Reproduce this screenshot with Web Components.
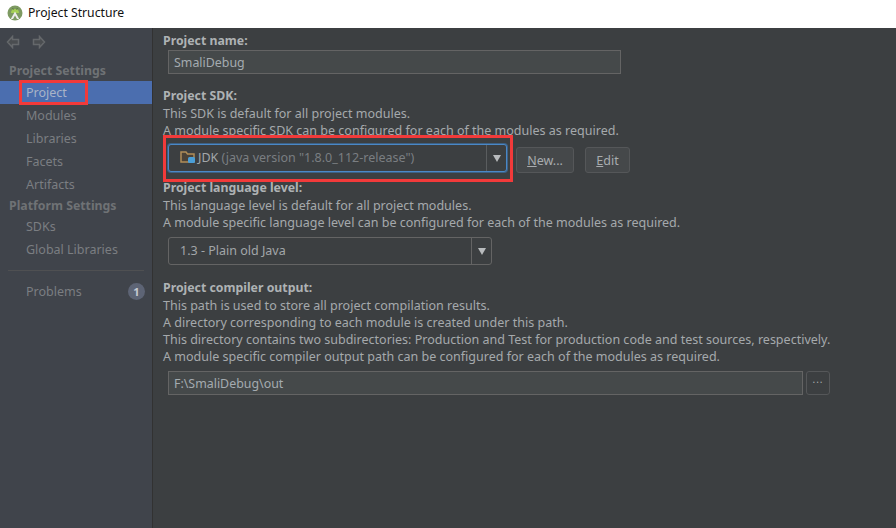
<!DOCTYPE html>
<html>
<head>
<meta charset="utf-8">
<title>Project Structure</title>
<style>
  html, body { margin: 0; height: 100%; }
  body { font-family: "Noto Sans", "Open Sans", sans-serif; font-size: 13px; overflow: hidden; }
</style>
</head>
<body>
<project-structure></project-structure>

<script>
const FONT = '"Noto Sans", "Open Sans", sans-serif';

class TitleBar extends HTMLElement {
  connectedCallback() {
    this.attachShadow({ mode: 'open' }).innerHTML = `
      <style>
        :host { display: flex; align-items: center; height: 28px; background: #fff; color: #111; padding: 0 0 3px 7px; gap: 5px; font-size: 12.2px; box-sizing: border-box; }
        svg { display: block; }
      </style>
      <svg width="16" height="16" viewBox="0 0 16 16">
        <circle cx="8" cy="8" r="7.500" fill="#7d9a62"/>
        <path d="M4 8a4 4 0 0 1 8 0z" fill="#a4cf55"/>
        <path d="M8 6.500L3.800 14h2.200L8 10.500 10 14h2.200z" fill="#ececec"/>
        <path d="M5.500 3l1 1.500M10.500 3l-1 1.500" stroke="#55703a" stroke-width=".9"/>
      </svg>
      <span><slot></slot></span>`;
  }
}

class NavArrows extends HTMLElement {
  connectedCallback() {
    this.attachShadow({ mode: 'open' }).innerHTML = `
      <style>
        :host { display: flex; gap: 12px; height: 14px; padding: 7px 0 0 6px; }
        svg { display: block; }
      </style>
      <svg width="14" height="14" viewBox="0 0 14 14"><path d="M1.500 7l5-5.500v3h6v5h-6v3z" fill="#4a4d50" stroke="#65686b" stroke-width="1.500"/></svg>
      <svg width="14" height="14" viewBox="0 0 14 14"><path d="M12.500 7l-5-5.500v3h-6v5h6v3z" fill="#4a4d50" stroke="#65686b" stroke-width="1.500"/></svg>`;
  }
}

class NavHeading extends HTMLElement {
  connectedCallback() {
    this.attachShadow({ mode: 'open' }).innerHTML = `
      <style>
        :host { display: block; line-height: 19px; padding-left: 9px; font-weight: 700; font-size: 12.3px; color: #6f7275; white-space: nowrap; }
      </style><slot></slot>`;
  }
}

class NavItem extends HTMLElement {
  connectedCallback() {
    const sel = this.hasAttribute('selected');
    this.attachShadow({ mode: 'open' }).innerHTML = `
      <style>
        :host { display: flex; align-items: center; height: 23px; padding-left: 26px; padding-right: 7px; font-size: 12.5px; color: ${sel ? '#a9b4c8' : '#7b7e82'}; background: ${sel ? '#4b6eaf' : 'transparent'}; }
        .sp { flex: 1; }
        .badge { width: 17px; height: 17px; border-radius: 50%; background: #5d6475; color: #c5c9d1; font-size: 11px; font-weight: 700; display: flex; align-items: center; justify-content: center; }
      </style>
      <slot></slot><span class="sp"></span>
      ${this.hasAttribute('badge') ? `<span class="badge">${this.getAttribute('badge')}</span>` : ''}`;
  }
}

class SideBar extends HTMLElement {
  connectedCallback() {
    this.attachShadow({ mode: 'open' }).innerHTML = `
      <style>
        :host { display: flex; flex-direction: column; width: 152px; flex: none; background: #40444b; border-right: 1px solid #323232; box-sizing: content-box; font-family: ${FONT}; }
        .hr { height: 1px; background: #4f5052; margin: 9px 8px 9px 8px; }
      </style>
      <nav-arrows></nav-arrows>
      <nav-heading style="margin-top:12px;height:20px;line-height:20px">Project Settings</nav-heading>
      <nav-item selected>Project</nav-item>
      <nav-item>Modules</nav-item>
      <nav-item>Libraries</nav-item>
      <nav-item>Facets</nav-item>
      <nav-item>Artifacts</nav-item>
      <nav-heading>Platform Settings</nav-heading>
      <nav-item>SDKs</nav-item>
      <nav-item>Global Libraries</nav-item>
      <div class="hr"></div>
      <nav-item badge="1">Problems</nav-item>`;
  }
}

class TextField extends HTMLElement {
  connectedCallback() {
    const w = this.getAttribute('width');
    this.attachShadow({ mode: 'open' }).innerHTML = `
      <style>
        :host { display: flex; align-items: center; box-sizing: border-box; width: ${w}px; height: 24px; padding-left: 5px; margin-left: 5px; background: #45494a; border: 1px solid #646464; color: #a4abb0; font-size: 12.4px; }
      </style><slot></slot>`;
  }
}

class ComboBox extends HTMLElement {
  connectedCallback() {
    const w = this.getAttribute('width');
    const focus = this.hasAttribute('focused');
    this.attachShadow({ mode: 'open' }).innerHTML = `
      <style>
        :host { display: flex; box-sizing: border-box; width: ${w}px; height: 28px; margin-left: 5px; border: 1px solid ${focus ? '#4a88c7' : '#646464'}; border-radius: 3px; background: #3c3f41; color: #a2a6a9; font-size: 12.5px; ${focus ? 'box-shadow: 0 0 0 1px #3d6185;' : ''} }
        .val { flex: 1; display: flex; align-items: center; gap: 2px; padding: 0 0 2px 11px; white-space: nowrap; }
        .arrow { width: 19px; flex: none; border-left: 1px solid ${focus ? '#5a5d5f' : '#646464'}; display: flex; align-items: center; justify-content: center; }
        .arrow i { width: 0; height: 0; border: 4.5px solid transparent; border-top: 7px solid #b8bbbd; border-bottom: 0; }
      </style>
      <div class="val"><slot name="icon"></slot><slot></slot></div>
      <div class="arrow"><i></i></div>`;
  }
}

class PlainButton extends HTMLElement {
  connectedCallback() {
    this.attachShadow({ mode: 'open' }).innerHTML = `
      <style>
        :host { display: inline-flex; align-items: center; justify-content: center; box-sizing: border-box; height: 26px; background: #45484a; border: 1px solid #555759; border-radius: 3px; color: #a8acaf; font-size: 12.5px; }
      </style><slot></slot>`;
  }
}

class FormSection extends HTMLElement {
  connectedCallback() {
    this.attachShadow({ mode: 'open' }).innerHTML = `
      <style>
        :host { display: block; color: #a5a9ac; font-size: 12.53px; line-height: 17px; white-space: nowrap; }
        .t { font-weight: 700; color: #aeb2b4; height: 18px; font-size: 12.3px; }
      </style>
      <div class="t">${this.getAttribute('label')}</div>
      <slot name="desc"></slot>
      <slot></slot>`;
  }
}

class ProjectStructure extends HTMLElement {
  connectedCallback() {
    this.attachShadow({ mode: 'open' }).innerHTML = `
      <style>
        :host { display: flex; flex-direction: column; width: 896px; height: 528px; position: relative; font-family: ${FONT}; }
        .body { flex: 1; display: flex; min-height: 0; background: #3c3f41; }
        main { flex: 1; padding: 4px 0 0 10px; display: flex; flex-direction: column; color: #a9adb0; }
        .row { display: flex; align-items: flex-start; gap: 11px; }
        .mark { position: absolute; border: 3px solid #f23a3a; box-sizing: border-box; pointer-events: none; }
        u { text-decoration: underline; }
        .gray { color: #7a7e81; }
        .btn { margin-top: 3px; }
        .more { width: 24px; height: 24px; padding-bottom: 8px; background: #3c3f41; font-size: 10px; letter-spacing: 1px; }
      </style>
      <title-bar>Project Structure</title-bar>
      <div class="body">
        <side-bar></side-bar>
        <main>
          <form-section label="Project name:" style="height:55px">
            <text-field width="453">SmaliDebug</text-field>
          </form-section>
          <form-section label="Project SDK:" style="height:92px">
            <div slot="desc">This SDK is default for all project modules.</div>
            <div slot="desc">A module specific SDK can be configured for each of the modules as required.</div>
            <div class="row" style="margin-top:5px">
              <combo-box width="339" focused>
                <svg slot="icon" width="16" height="14" viewBox="0 0 16 14">
                  <path d="M1 2h5l1.500 2H14v8H1z" fill="#4a4238" stroke="#b08d58" stroke-width="1.500"/>
                  <rect x="8" y="7" width="7" height="6" rx="1.500" fill="#4a9fd8"/>
                </svg>
                <span>JDK <span class="gray">(java version "1.8.0_112-release")</span></span>
              </combo-box>
              <plain-button class="btn" style="width:58px;margin-left:-2px"><u>N</u>ew...</plain-button>
              <plain-button class="btn" style="width:45px"><u>E</u>dit</plain-button>
            </div>
          </form-section>
          <form-section label="Project language level:" style="height:100px">
            <div slot="desc">This language level is default for all project modules.</div>
            <div slot="desc">A module specific language level can be configured for each of the modules as required.</div>
            <combo-box width="324" style="margin-top:6px">1.3 - Plain old Java</combo-box>
          </form-section>
          <form-section label="Project compiler output:">
            <div slot="desc">This path is used to store all project compilation results.</div>
            <div slot="desc">A directory corresponding to each module is created under this path.</div>
            <div slot="desc">This directory contains two subdirectories: Production and Test for production code and test sources, respectively.</div>
            <div slot="desc">A module specific compiler output path can be configured for each of the modules as required.</div>
            <div class="row" style="margin-top:6px;gap:3px">
              <text-field width="635">F:\\SmaliDebug\\out</text-field>
              <plain-button class="more">...</plain-button>
            </div>
          </form-section>
        </main>
      </div>
      <div class="mark" style="left:19px;top:80px;width:69px;height:25px"></div>
      <div class="mark" style="left:163px;top:135px;width:350px;height:47px"></div>`;
  }
}

customElements.define('title-bar', TitleBar);
customElements.define('nav-arrows', NavArrows);
customElements.define('nav-heading', NavHeading);
customElements.define('nav-item', NavItem);
customElements.define('side-bar', SideBar);
customElements.define('text-field', TextField);
customElements.define('combo-box', ComboBox);
customElements.define('plain-button', PlainButton);
customElements.define('form-section', FormSection);
customElements.define('project-structure', ProjectStructure);
</script>
</body>
</html>
